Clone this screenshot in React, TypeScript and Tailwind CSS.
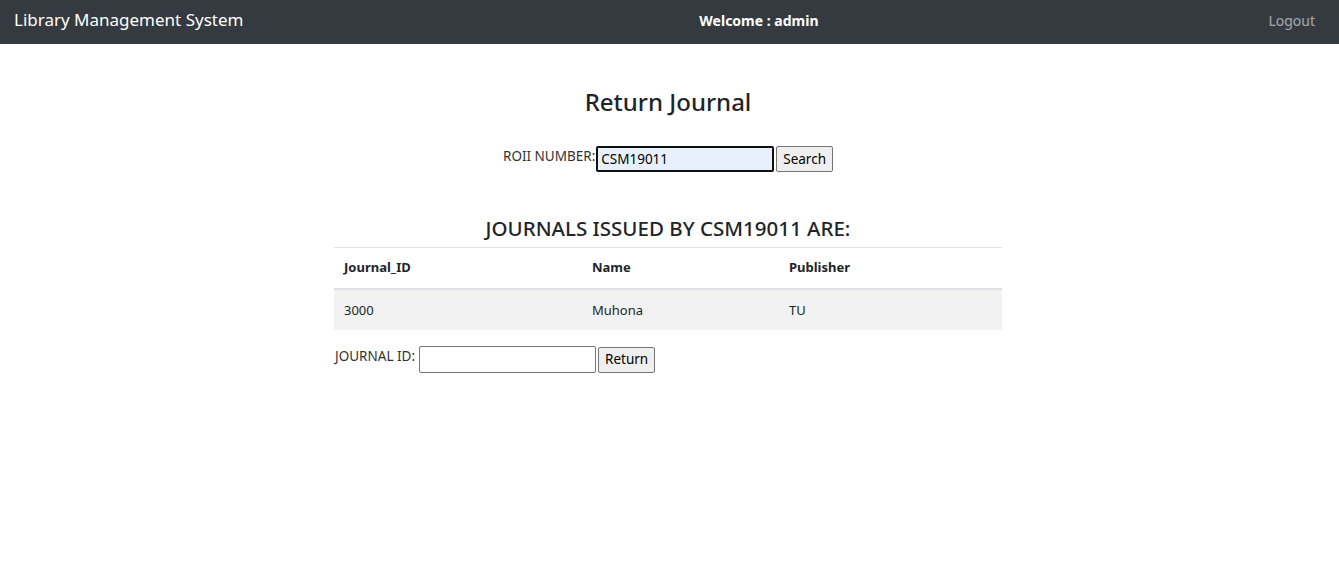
import { useState } from "react";

const font = { fontFamily: '"Noto Sans", "Open Sans", Arial, sans-serif' };

export default function App() {
  const [roll, setRoll] = useState("CSM19011");
  const [journalId, setJournalId] = useState("");

  const rows = [{ id: "3000", name: "Muhona", publisher: "TU" }];

  return (
    <div className="min-h-[572px] bg-white text-[#212529]" style={font}>
      {/* navbar */}
      <nav className="flex h-[44px] items-center bg-[#343a40] pb-[4px] pl-[14px] pr-[24px]">
        <div className="text-[17px] text-white">Library Management System</div>
        <div className="flex flex-1 justify-center pl-[6px] text-[14px] font-bold text-white">Welcome : admin</div>
        <a className="text-[14px] text-white/55">Logout</a>
      </nav>

      <div className="flex justify-center pr-[3px]">
        <div className="w-[668px] pt-[42px]">
          <h3 className="text-center text-[24px] font-medium leading-[32px]">Return Journal</h3>

          <div className="mt-[28px] flex items-start justify-center text-[13.5px]">
            <label className="mt-[1px] leading-[18px] text-[#333]">ROII NUMBER:</label>
            <input
              value={roll}
              onChange={(e) => setRoll(e.target.value)}
              className="ml-[1px] h-[26px] w-[178px] rounded-[2px] border-2 border-[#101010] bg-[#e8f0fe] px-[3px] text-[13.5px] text-black outline-none"
            />
            <button className="ml-[2px] h-[26px] rounded-[2px] border border-[#767676] bg-[#efefef] px-[6px] text-[13.5px] text-black">
              Search
            </button>
          </div>

          <h4 className="mt-[42px] text-center text-[20.5px] font-medium leading-[28px]">
            JOURNALS ISSUED BY CSM19011 ARE:
          </h4>

          <table className="mt-[5px] w-full border-collapse text-[13px]">
            <thead>
              <tr className="border-t border-[#dee2e6]">
                <th className="w-[248px] px-[10px] py-[10px] text-left font-bold">Journal_ID</th>
                <th className="w-[197px] px-[10px] py-[10px] text-left font-bold">Name</th>
                <th className="px-[10px] py-[10px] text-left font-bold">Publisher</th>
              </tr>
            </thead>
            <tbody>
              {rows.map((r) => (
                <tr key={r.id} className="border-t-2 border-[#dee2e6] bg-[#f2f2f2]">
                  <td className="px-[10px] py-[10px] leading-[20px]">{r.id}</td>
                  <td className="px-[10px] py-[10px] leading-[20px]">{r.name}</td>
                  <td className="px-[10px] py-[10px] leading-[20px]">{r.publisher}</td>
                </tr>
              ))}
            </tbody>
          </table>

          <div className="mt-[16px] flex items-start text-[13.5px]">
            <label className="ml-[1px] mt-[1px] leading-[18px] text-[#333]">JOURNAL ID:</label>
            <input
              value={journalId}
              onChange={(e) => setJournalId(e.target.value)}
              className="ml-[4px] h-[27px] w-[177px] rounded-[2px] border border-[#767676] bg-white px-[3px] text-[13.5px] outline-none"
            />
            <button className="ml-[2px] mt-[1px] h-[26px] rounded-[2px] border border-[#767676] bg-[#efefef] px-[6px] text-[13.5px] text-black">
              Return
            </button>
          </div>
        </div>
      </div>
    </div>
  );
}
